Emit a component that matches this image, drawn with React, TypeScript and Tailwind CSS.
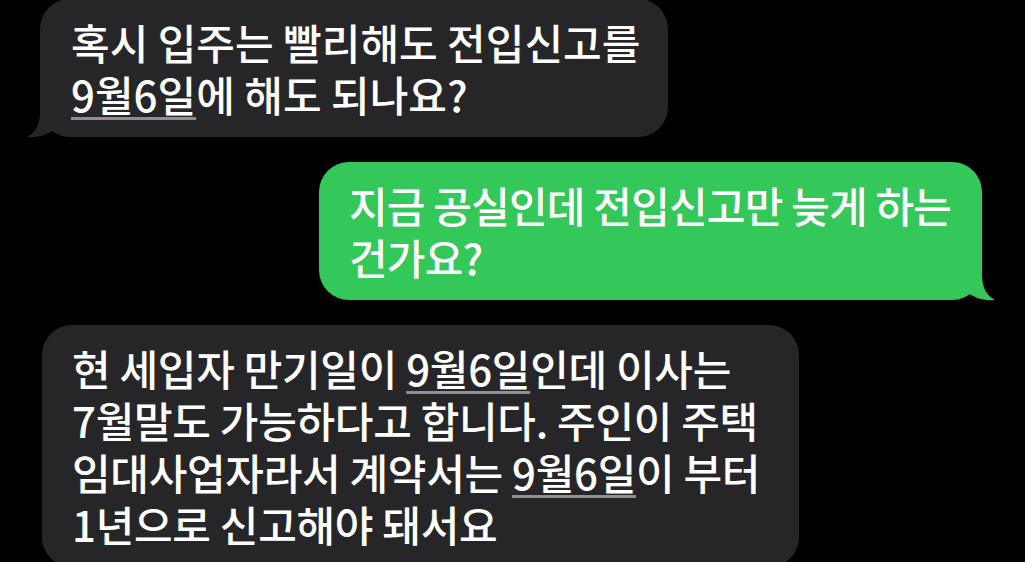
import React from "react";

const font = {
  fontFamily: '"Noto Sans CJK KR", "Noto Sans", sans-serif',
};

function Tail({ color, flip }: { color: string; flip?: boolean }) {
  return (
    <svg
      width="44"
      height="34"
      viewBox="0 0 44 34"
      className={
        flip
          ? "absolute -right-[14px] -bottom-[1px] -scale-x-100"
          : "absolute -left-[14px] -bottom-[1px]"
      }
    >
      <path
        d="M14 0 L14 8 C14 20 10 28 1 33 C12 34 22 31 31 24 L31 0 Z"
        fill={color}
      />
    </svg>
  );
}

function U({ children }: { children: React.ReactNode }) {
  return (
    <span className="underline decoration-[#8e8e93] decoration-[3px] underline-offset-[5px]">
      {children}
    </span>
  );
}

export default function App() {
  return (
    <div
      className="w-[1025px] h-[562px] bg-black overflow-hidden flex flex-col text-white text-[42px] leading-[52px] font-medium"
      style={font}
    >
      <div className="relative ml-[40px] -mt-px w-[628px] h-[138px] rounded-[30px] bg-[#262628] pl-[31px] py-[17px]">
        <Tail color="#262628" />
        <p className="relative whitespace-nowrap">
          혹시 입주는 빨리해도 전입신고를
          <br />
          <U>9월6일</U>에 해도 되나요?
        </p>
      </div>

      <div className="relative self-end mr-[43px] mt-[25px] w-[663px] h-[138px] rounded-[30px] bg-[#34c759] pl-[30px] py-[17px] tracking-[-0.8px]">
        <Tail color="#34c759" flip />
        <p className="relative whitespace-nowrap">
          지금 공실인데 전입신고만 늦게 하는
          <br />
          건가요?
        </p>
      </div>

      <div className="relative ml-[42px] mt-[25px] w-[757px] shrink-0 h-[242px] rounded-[30px] bg-[#262628] pl-[30px] py-[17px] tracking-[-0.3px]">
        <p className="whitespace-nowrap">
          현 세입자 만기일이 <U>9월6일</U>인데 이사는
          <br />
          7월말도 가능하다고 합니다. 주인이 주택
          <br />
          임대사업자라서 계약서는 <U>9월6일</U>이 부터
          <br />
          1년으로 신고해야 돼서요
        </p>
      </div>
    </div>
  );
}
